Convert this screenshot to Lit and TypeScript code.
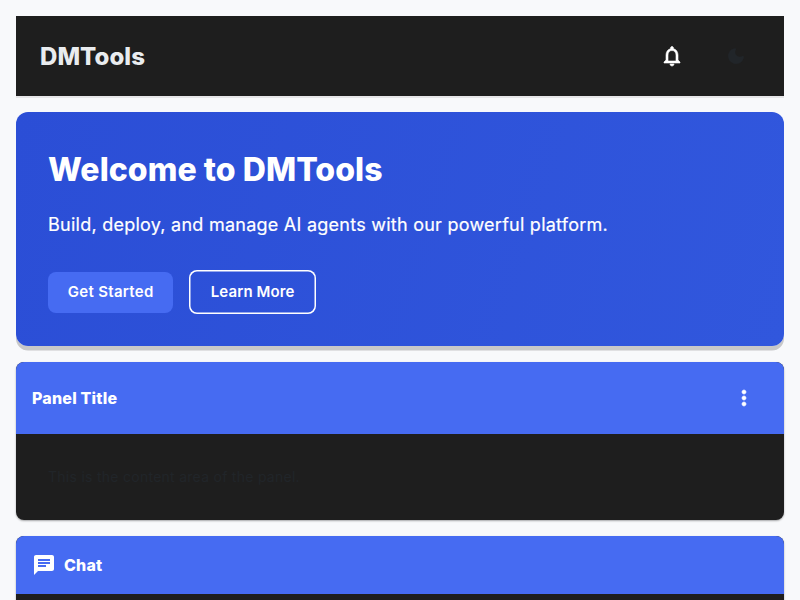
import { LitElement, html, css } from "lit";
import { customElement } from "lit/decorators.js";

@customElement("app-root")
export class AppRoot extends LitElement {
  static styles = css`
    :host {
      display: flex;
      flex-direction: column;
      gap: 16px;
      box-sizing: border-box;
      height: 600px;
      padding: 16px 16px 0;
      overflow: hidden;
      background: #f8f9fb;
      color: #fff;
      font-family: Inter, "Liberation Sans", sans-serif;
    }
    * { box-sizing: border-box; margin: 0; }
    svg { display: block; fill: currentColor; flex: none; }
    header {
      display: flex;
      flex: none;
      align-items: center;
      height: 80px;
      padding: 0 36px 0 24px;
      background: #1e1e1e;
      box-shadow: 0 2px 0 #e6e6e8;
    }
    .brand {
      flex: 1;
      padding-top: 1px;
      color: #e9ecef;
      font-size: 24px;
      font-weight: 800;
      line-height: 32px;
      letter-spacing: 0.05px;
    }
    .actions { display: flex; gap: 40px; }
    .bell, .dots { stroke: currentColor; stroke-width: 0.6px; }
    .moon { color: #212529; }
    .hero {
      flex: none;
      height: 234px;
      padding: 32px;
      border-radius: 12px;
      background: linear-gradient(107deg, #2b4ed6, #3157dd);
      box-shadow: 0 4.5px 0 #c8c8c9;
    }
    h1 { font-size: 32px; font-weight: 800; line-height: 51px; letter-spacing: 0.06px; }
    .lead {
      margin-top: 16px;
      font-size: 18px;
      line-height: 27px;
      letter-spacing: 0.25px;
      -webkit-text-stroke: 0.2px #fff;
    }
    .buttons { display: flex; align-items: center; gap: 16px; margin-top: 32px; }
    button {
      height: 41px;
      width: 125.4px;
      padding: 0;
      border: 0;
      border-radius: 8px;
      background: #466bf2;
      color: #fff;
      font: 600 15px/20px Inter, sans-serif;
      letter-spacing: 0.3px;
      white-space: nowrap;
    }
    .outlined {
      height: 44px;
      width: 126.5px;
      box-shadow: inset 0 0 0 1.5px #fff;
      background: transparent;
      letter-spacing: 0.12px;
    }
    .panel {
      flex: none;
      border-radius: 8px;
      overflow: hidden;
      background: #1e1e1e;
      box-shadow: 0 1px 2px #00000055;
    }
    .bar {
      display: flex;
      align-items: center;
      gap: 8px;
      height: 72px;
      padding: 0 28px 0 16px;
      background: #466bf2;
      font-size: 16px;
      font-weight: 800;
      line-height: 24px;
      letter-spacing: 0.2px;
    }
    .bar span { flex: 1; }
    .chat { height: 58px; }
    .body { height: 86px; padding: 32px; color: #212529; font-size: 14px; line-height: 22px; letter-spacing: 0.27px; }
  `;

  render() {
    return html`
      <header>
        <div class="brand">DMTools</div>
        <div class="actions">
          <svg class="bell" width="24" height="24" viewBox="0 0 24 24"><path d="M12 22c1.1 0 2-.9 2-2h-4c0 1.1.9 2 2 2zm6-6v-5c0-3.07-1.63-5.64-4.5-6.32V4c0-.83-.67-1.5-1.5-1.5s-1.5.67-1.5 1.5v.68C7.64 5.36 6 7.92 6 11v5l-2 2v1h16v-1l-2-2zm-2 1H8v-6c0-2.48 1.51-4.5 4-4.5s4 2.02 4 4.5v6z"/></svg>
          <svg class="moon" width="24" height="24" viewBox="0 0 24 24"><path d="M11.01 3.05C6.51 3.54 3 7.36 3 12c0 4.97 4.03 9 9 9 4.63 0 8.45-3.5 8.95-8 .09-.79-.78-1.42-1.54-.95-.84.54-1.84.85-2.91.85-2.98 0-5.4-2.42-5.4-5.4 0-1.06.31-2.06.84-2.89.45-.67-.04-1.63-.93-1.56z" transform="translate(1.5 1.5) scale(.875)"/></svg>
        </div>
      </header>
      <section class="hero">
        <h1>Welcome to DMTools</h1>
        <p class="lead">Build, deploy, and manage AI agents with our powerful platform.</p>
        <div class="buttons">
          <button>Get Started</button>
          <button class="outlined">Learn More</button>
        </div>
      </section>
      <section class="panel">
        <div class="bar">
          <span>Panel Title</span>
          <svg class="dots" width="24" height="24" viewBox="0 0 24 24"><path d="M12 8c1.1 0 2-.9 2-2s-.9-2-2-2-2 .9-2 2 .9 2 2 2zm0 2c-1.1 0-2 .9-2 2s.9 2 2 2 2-.9 2-2-.9-2-2-2zm0 6c-1.1 0-2 .9-2 2s.9 2 2 2 2-.9 2-2-.9-2-2-2z"/></svg>
        </div>
        <div class="body">This is the content area of the panel.</div>
      </section>
      <section class="panel">
        <div class="bar chat">
          <svg width="24" height="24" viewBox="0 0 24 24"><path d="M20 2H4c-1.1 0-1.99.9-1.99 2L2 22l4-4h14c1.1 0 2-.9 2-2V4c0-1.1-.9-2-2-2zM6 9h12v2H6V9zm8 5H6v-2h8v2zm4-6H6V6h12v2z"/></svg>
          <span>Chat</span>
        </div>
        <div class="body"></div>
      </section>
    `;
  }
}
